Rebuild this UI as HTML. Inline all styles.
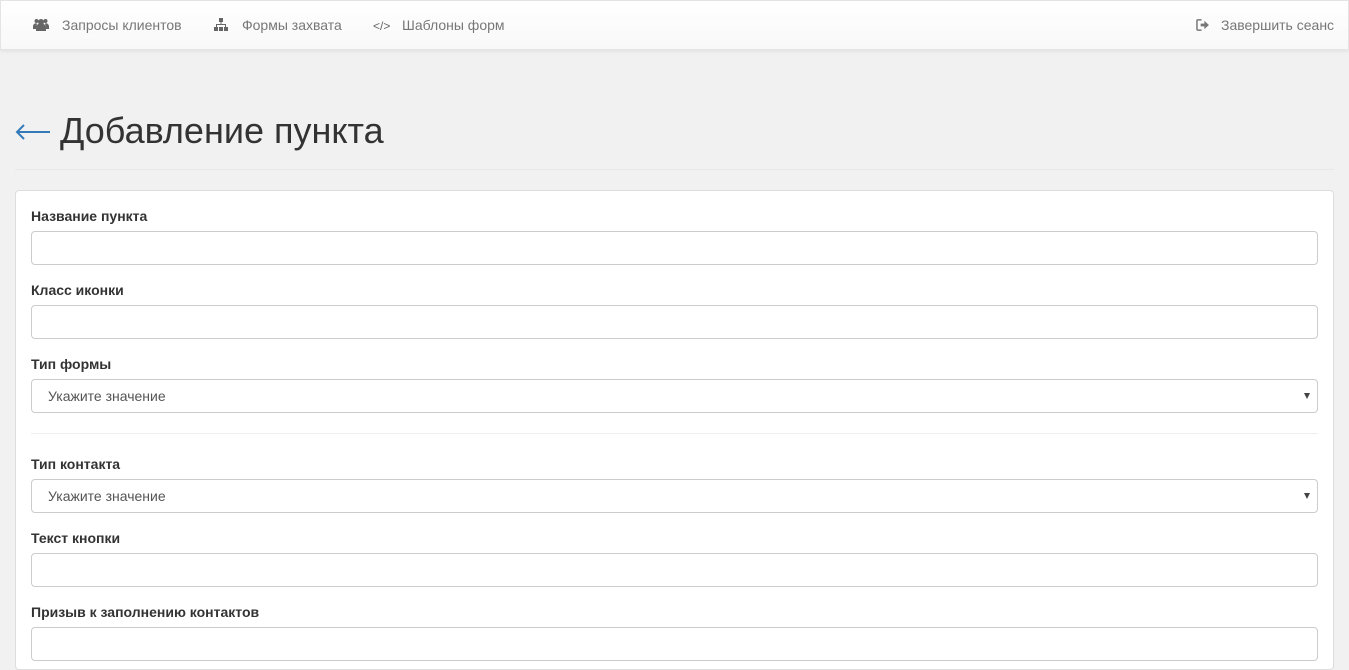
<!DOCTYPE html>
<html><head><meta charset="utf-8"><style>
*{box-sizing:border-box}
body{margin:0;background:#f1f1f1;font-family:"Liberation Sans",Arial,sans-serif;color:#333;font-size:14px;width:1349px;height:660px;overflow:hidden;position:relative}
.nav{position:absolute;left:0;top:0;width:1349px;height:50px;background:linear-gradient(#fff,#f8f8f8);border:1px solid #e4e4e4;box-shadow:0 1px 4px rgba(0,0,0,.08)}
.nav a{position:absolute;top:16px;color:#777;font-size:14px;text-decoration:none;line-height:16px}
.ic{position:absolute;top:17px;color:#666}
h1{position:absolute;left:60px;top:108px;margin:0;font-size:36px;font-weight:400;line-height:46px;color:#333}
.arr{position:absolute;left:15px;top:121px;width:36px;height:22px}
.hr{position:absolute;left:15px;top:169px;width:1319px;border-top:1px solid #e8e8e8}
.card{position:absolute;left:15px;top:190px;width:1319px;height:480px;background:#fff;border:1px solid #ddd;border-radius:4px}
label{position:absolute;left:31px;font-weight:bold;font-size:14px}
.in{position:absolute;left:31px;width:1287px;height:34px;border:1px solid #ccc;border-radius:4px;background:#fff;font-size:14px;color:#555;padding:8px 16px;line-height:16px}
.in b{position:absolute;right:7px;top:13px;border:3px solid transparent;border-top:6px solid #444;border-bottom:0}
.sep{position:absolute;left:31px;top:433px;width:1287px;border-top:1px solid #eee}
</style></head><body>
<div class="nav">
<svg class="ic" style="left:32px" width="16" height="14" viewBox="0 0 16 14" fill="#666"><circle cx="8" cy="4" r="3"/><circle cx="3.5" cy="3" r="2"/><circle cx="12.5" cy="3" r="2"/><path d="M3 13v-3a5 5 0 0 1 10 0v3z"/><path d="M0 11V8a3 3 0 0 1 4-2.5L3 11zM16 11V8a3 3 0 0 0-4-2.5L13 11z"/></svg>
<a style="left:61px">Запросы клиентов</a>
<svg class="ic" style="left:213px" width="14" height="13" viewBox="0 0 14 13" fill="#666"><rect x="5" y="0" width="4" height="4"/><rect x="6.5" y="4" width="1" height="3"/><rect x="2" y="6" width="10" height="1"/><rect x="2" y="6" width="1" height="3"/><rect x="11" y="6" width="1" height="3"/><rect x="0" y="9" width="4" height="4"/><rect x="5" y="9" width="4" height="4"/><rect x="10" y="9" width="4" height="4"/></svg>
<a style="left:241px">Формы захвата</a>
<span class="ic" style="left:372px;top:18px;font-size:12px">&lt;/&gt;</span>
<a style="left:401px">Шаблоны форм</a>
<svg class="ic" style="left:1195px;top:18px" width="13" height="12" viewBox="0 0 14 13"><path d="M6 1H2a1 1 0 0 0-1 1v9a1 1 0 0 0 1 1h4" stroke="#777" stroke-width="1.6" fill="none"/><path d="M5 5h4V2l5 4.5L9 11V8H5z" fill="#777"/></svg>
<a style="left:1220px">Завершить сеанс</a>
</div>
<svg class="arr" viewBox="0 0 36 22"><path d="M2 11H35M9 4L2 11L9 18" stroke="#337ab7" stroke-width="2" fill="none"/></svg>
<h1>Добавление пункта</h1>
<div class="hr"></div>
<div class="card"></div>
<label style="top:208px">Название пункта</label>
<div class="in" style="top:231px"></div>
<label style="top:282px">Класс иконки</label>
<div class="in" style="top:305px"></div>
<label style="top:356px">Тип формы</label>
<div class="in" style="top:379px">Укажите значение<b></b></div>
<div class="sep"></div>
<label style="top:456px">Тип контакта</label>
<div class="in" style="top:479px">Укажите значение<b></b></div>
<label style="top:530px">Текст кнопки</label>
<div class="in" style="top:553px"></div>
<label style="top:604px">Призыв к заполнению контактов</label>
<div class="in" style="top:627px"></div>
</body></html>
